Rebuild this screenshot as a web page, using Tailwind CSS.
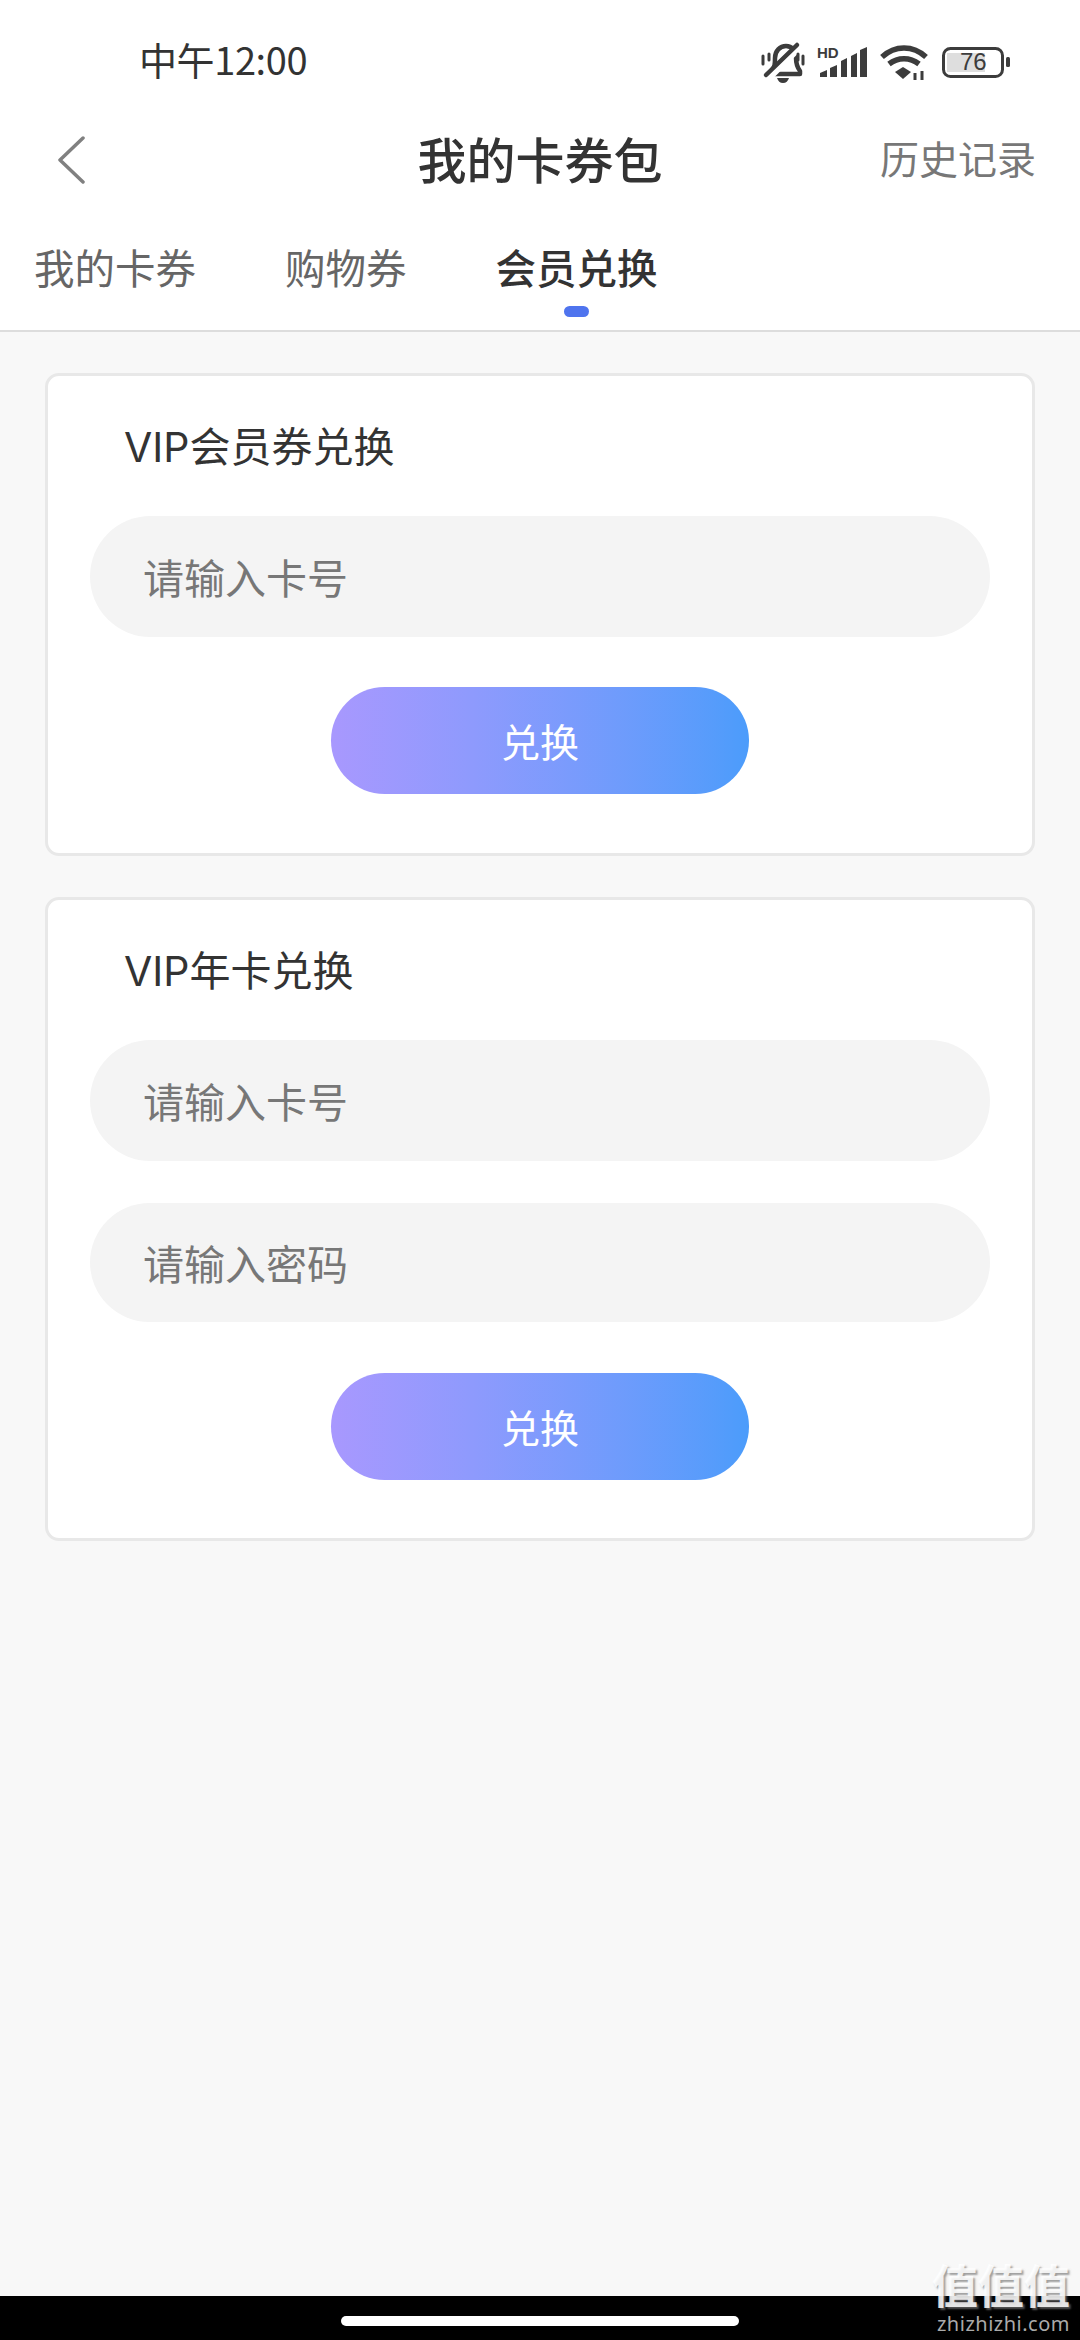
<!DOCTYPE html>
<html lang="zh">
<head>
<meta charset="UTF-8">
<title>我的卡券包</title>
<script src="https://cdn.jsdelivr.net/npm/@tailwindcss/browser@4"></script>
</head>
<body class="bg-[#f8f8f8]">
<div class="relative w-[1080px] h-[2340px] flex flex-col overflow-hidden font-['Noto_Sans_CJK_SC','Noto_Sans',sans-serif] bg-[#f8f8f8]">

    <!-- STATUS BAR -->
    <div class="h-[124px] bg-white flex items-center pl-[139px] pb-[6px] shrink-0">
        <span class="text-[38px] leading-none tracking-[-0.4px] text-[#333]">中午12:00</span>
        <svg class="absolute left-[755px] top-[36px]" width="262" height="52" viewBox="755 36 262 52" fill="none">
            <!-- bell -->
            <path d="M771 71c4-4 4-7 4-13 0-7 5-12 11-12 6 0 10 5 10 12 0 6 1 9 4 13v3h-29z" stroke="#3c3c3c" stroke-width="4.5" stroke-linejoin="round"/>
            <path d="M777 78h12c-1 3-3 5-6 5s-5-2-6-5z" fill="#3c3c3c"/>
            <path d="M768 78l32-32" stroke="#fff" stroke-width="8"/>
            <path d="M766 75l31-30" stroke="#3c3c3c" stroke-width="4.5" stroke-linecap="round"/>
            <path d="M763 56v8M803 56v8" stroke="#3c3c3c" stroke-width="3" stroke-linecap="round"/>
            <path d="M769 54v6M798 54v6" stroke="#3c3c3c" stroke-width="3" stroke-linecap="round"/>
            <!-- signal -->
            <path d="M820 77v-4l7-3v7z" fill="#3c3c3c"/>
            <path d="M830 77v-9l7-3v12z" fill="#3c3c3c"/>
            <path d="M841 77v-16l6-3v19z" fill="#3c3c3c"/>
            <path d="M851 77v-21l6-3v24z" fill="#3c3c3c"/>
            <path d="M860 77v-27l7-3v30z" fill="#3c3c3c"/>
            <!-- wifi -->
            <path d="M882 57c13-12 31-12 44 0" stroke="#3c3c3c" stroke-width="5.5"/>
            <path d="M889 64c9-7 21-7 30 0" stroke="#3c3c3c" stroke-width="5.5"/>
            <path d="M903 79l-8-7 8-5 8 5z" fill="#3c3c3c"/>
            <path d="M915 73v7M922 71v9" stroke="#3c3c3c" stroke-width="3"/>
            <!-- battery -->
            <rect x="943.5" y="48.5" width="59" height="28" rx="7" stroke="#3c3c3c" stroke-width="3"/>
            <rect x="947" y="53" width="38" height="19" fill="#dedede"/>
            <rect x="1006" y="57" width="4" height="10" rx="1.5" fill="#3c3c3c"/>
        </svg>
        <span class="absolute left-[817px] top-[45px] text-[15px] leading-none font-bold text-[#3c3c3c] font-['Liberation_Sans',sans-serif]">HD</span>
        <span class="absolute left-[960px] top-[50px] text-[24px] leading-none text-[#3c3c3c] font-['Liberation_Sans',sans-serif]">76</span>
    </div>

    <!-- NAV -->
    <div class="h-[72px] bg-white flex items-center relative shrink-0">
        <svg class="ml-[56px]" width="30" height="48" viewBox="0 0 30 48" fill="none">
            <path d="M27 2L4 24l23 22" stroke="#808080" stroke-width="3.5" stroke-linecap="round" stroke-linejoin="round"/>
        </svg>
        <span class="absolute left-0 right-0 text-center text-[49px] leading-none font-medium text-[#333] pb-[6px]">我的卡券包</span>
        <span class="ml-auto mr-[44px] text-[39px] leading-none text-[#777] pb-[6px]">历史记录</span>
    </div>

    <!-- TABS -->
    <div class="h-[136px] bg-white border-b-2 border-[#dddddd] flex items-start pl-[34px] gap-[89px] pt-[49px] shrink-0">
        <span class="text-[40.5px] leading-[44px] text-[#666]">我的卡券</span>
        <span class="text-[40.5px] leading-[44px] text-[#666]">购物券</span>
        <div class="relative flex flex-col items-center">
            <span class="text-[40.5px] leading-[44px] font-medium text-[#333]">会员兑换</span>
            <div class="w-[25px] h-[11px] rounded-full bg-[#4f74ee] mt-[17px]"></div>
        </div>
    </div>

    <!-- VIP COUPON -->
    <div class="mx-[45px] mt-[41px] h-[483px] bg-white border-[3px] border-[#e8e8e8] rounded-[14px] flex flex-col shrink-0">
        <div class="h-[140px] pt-[3px] pl-[76px] flex items-center text-[41px] leading-none text-[#333] font-['Inter','Noto_Sans_CJK_SC',sans-serif]">VIP会员券兑换</div>
        <div class="mx-[42px] h-[121px] rounded-full bg-[#f4f4f4] flex items-center pl-[53px] text-[41px] text-[#777]">请输入卡号</div>
        <div class="self-center mt-[50px] w-[418px] h-[107px] rounded-full bg-gradient-to-r from-[#a898fe] to-[#4b9cfb] flex items-center justify-center text-[39px] text-white">兑换</div>
    </div>

    <!-- VIP YEAR CARD -->
    <div class="mx-[45px] mt-[41px] h-[644px] bg-white border-[3px] border-[#e8e8e8] rounded-[14px] flex flex-col shrink-0">
        <div class="h-[140px] pt-[3px] pl-[76px] flex items-center text-[41px] leading-none text-[#333] font-['Inter','Noto_Sans_CJK_SC',sans-serif]">VIP年卡兑换</div>
        <div class="mx-[42px] h-[121px] rounded-full bg-[#f4f4f4] flex items-center pl-[53px] text-[41px] text-[#777]">请输入卡号</div>
        <div class="mx-[42px] mt-[42px] h-[119px] rounded-full bg-[#f4f4f4] flex items-center pl-[53px] text-[41px] text-[#777]">请输入密码</div>
        <div class="self-center mt-[51px] w-[418px] h-[107px] rounded-full bg-gradient-to-r from-[#a898fe] to-[#4b9cfb] flex items-center justify-center text-[39px] text-white">兑换</div>
    </div>

    <!-- HOME BAR -->
    <div class="mt-auto h-[44px] bg-black flex justify-center items-start pt-[20px] shrink-0">
        <div class="w-[398px] h-[10px] rounded-full bg-white"></div>
    </div>

    <!-- WATERMARK -->
    <div class="absolute right-[10px] bottom-[4px] flex flex-col items-end">
        <span class="text-[46px] leading-[48px] font-bold text-white/85 [text-shadow:2px_2px_2px_rgba(120,120,120,0.7)]">值值值</span>
        <span class="mt-[5px] text-[20px] leading-[24px] tracking-[0.5px] text-[#aaaaaa] font-['Noto_Sans',sans-serif]">zhizhizhi.com</span>
    </div>
</div>
</body>
</html>
